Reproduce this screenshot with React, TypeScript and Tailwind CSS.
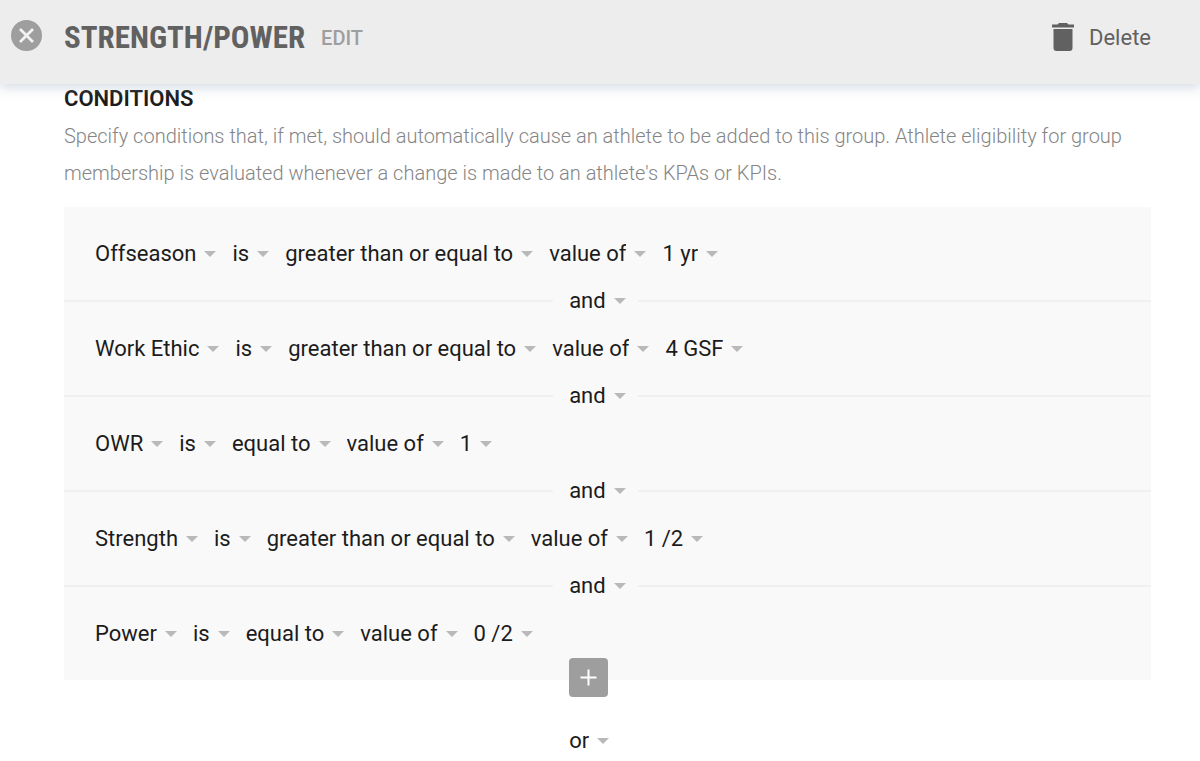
import { useState } from "react";

type Field = { name: string; value: string; options: string[] };

const comparisons = ["equal to", "greater than or equal to", "less than or equal to"];
const metrics = ["Offseason", "Work Ethic", "OWR", "Strength", "Power"];

function buildRow(metric: string, comparison: string, amount: string): Field[] {
  return [
    { name: "Metric", value: metric, options: metrics },
    { name: "Verb", value: "is", options: ["is", "is not"] },
    { name: "Comparison", value: comparison, options: comparisons },
    { name: "Source", value: "value of", options: ["value of", "change in"] },
    { name: "Amount", value: amount, options: [amount] },
  ];
}

const rows: Field[][] = [
  buildRow("Offseason", "greater than or equal to", "1 yr"),
  buildRow("Work Ethic", "greater than or equal to", "4 GSF"),
  buildRow("OWR", "equal to", "1"),
  buildRow("Strength", "greater than or equal to", "1 /2"),
  buildRow("Power", "equal to", "0 /2"),
];

function Dropdown({ label, initial, options }: { label: string; initial: string; options: string[] }) {
  const [value, setValue] = useState(initial);
  return (
    <div className="flex items-center">
      <select
        aria-label={label}
        value={value}
        onChange={(e) => setValue(e.target.value)}
        className="h-10 field-sizing-content cursor-pointer appearance-none bg-transparent py-1 pr-5 pl-0 text-[22px] leading-8 text-[#1c1c1c] outline-none"
      >
        {options.map((o) => (
          <option key={o}>{o}</option>
        ))}
      </select>
      <svg
        width="12"
        height="6"
        viewBox="0 0 12 6"
        aria-hidden="true"
        className="pointer-events-none -ml-3 shrink-0 fill-[#b9b9b9]"
      >
        <path d="M0 0h12L6 6z" />
      </svg>
    </div>
  );
}

function Connector({ index }: { index: number }) {
  return (
    <div className="-my-[19px] flex h-10 items-center">
      <div className="h-0.5 w-[45%] bg-[#f0f0f0]" />
      <div className="pr-3 pl-4">
        <Dropdown label={`Connector ${index}`} initial="and" options={["and", "or"]} />
      </div>
      <div className="h-0.5 flex-1 bg-[#f0f0f0]" />
    </div>
  );
}

export default function App() {
  return (
    <div className="min-h-screen bg-white font-['Roboto',sans-serif]">
      <header className="sticky top-0 z-10 flex h-21 items-center bg-[#ededed] pr-[49px] pb-2 pl-[11px] shadow-[0_2px_12px_1px_rgba(150,170,190,0.45)]">
        <button type="button" aria-label="Close" className="mr-[22px] shrink-0 pb-1.5">
          <svg width="31" height="31" viewBox="0 0 31 31" aria-hidden="true">
            <circle cx="15.5" cy="15.5" r="15.5" fill="#9e9e9e" />
            <path d="M9 9l13 13M22 9L9 22" stroke="#f2f2f2" strokeWidth="2.8" fill="none" />
          </svg>
        </button>
        <h1 className="font-['Roboto_Condensed','Roboto',sans-serif] text-[31px] leading-10 font-bold text-[#616161]">
          STRENGTH/POWER
        </h1>
        <button type="button" className="ml-4 text-xl leading-7 font-medium text-[#9e9e9e]">
          EDIT
        </button>
        <button type="button" className="ml-auto flex items-center text-[22px] leading-7 text-[#616161]">
          <svg width="22" height="30" viewBox="0 0 22 30" aria-hidden="true" className="mr-[15px] fill-[#616161]">
            <path d="M0 1.5h5.5L7 0h8l1.5 1.5H22v3H0z" />
            <path d="M1.5 6h19v19a3 3 0 0 1-3 3h-13a3 3 0 0 1-3-3z" />
          </svg>
          Delete
        </button>
      </header>

      <main className="pr-[49px] pl-16">
        <h2 className="text-[22px] leading-[30px] font-semibold text-[#1c1c1c]">CONDITIONS</h2>
        <p className="mt-1 text-xl leading-[37px] font-light text-[#858585]">
          Specify conditions that, if met, should automatically cause an athlete to be added to this group. Athlete
          eligibility for group membership is evaluated whenever a change is made to an athlete's KPAs or KPIs.
        </p>

        <section aria-label="Conditions" className="mt-[15px] bg-[#f9f9f9]">
          {rows.map((fields, i) => (
            <div key={i}>
              {i > 0 && <Connector index={i} />}
              <div className="flex h-[93px] items-center gap-4 pl-[31px]">
                {fields.map((f) => (
                  <Dropdown key={f.name} label={`${f.name} ${i + 1}`} initial={f.value} options={f.options} />
                ))}
              </div>
            </div>
          ))}
        </section>

        <div className="-mt-[22px] ml-[45%] flex flex-col items-start gap-6 pl-4">
          <button
            type="button"
            aria-label="Add condition"
            className="flex size-[39px] items-center justify-center rounded bg-[#9e9e9e]"
          >
            <svg width="17" height="17" viewBox="0 0 17 17" aria-hidden="true" className="stroke-white">
              <path d="M8.5 0.5v16M0.5 8.5h16" strokeWidth="2" />
            </svg>
          </button>
          <Dropdown label="Group connector" initial="or" options={["or", "and"]} />
        </div>
      </main>
    </div>
  );
}
